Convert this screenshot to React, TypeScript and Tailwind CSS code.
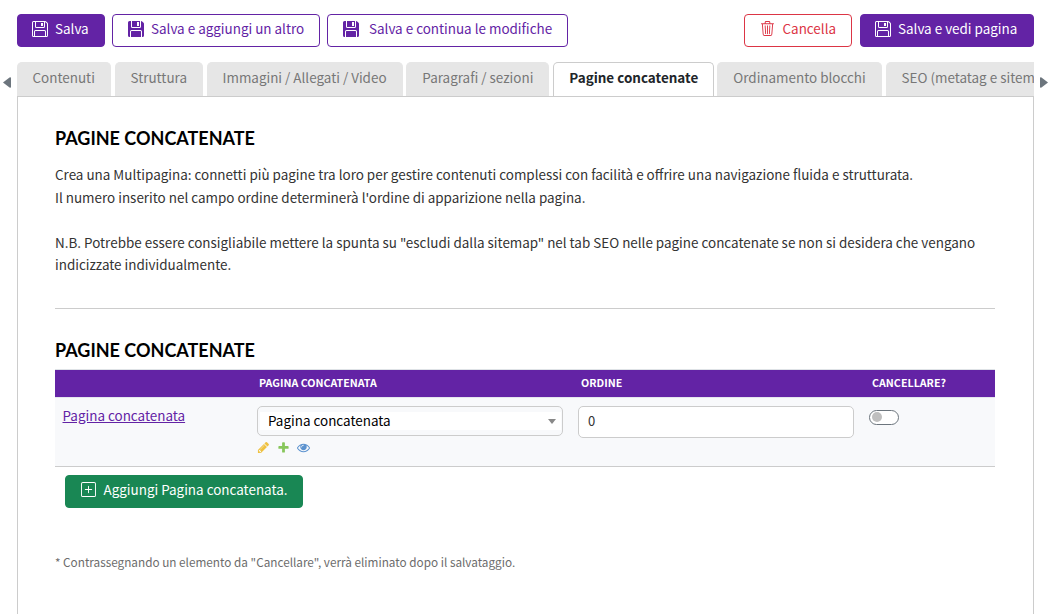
import type { ReactNode } from "react";
import { BsFloppy, BsFloppyFill, BsPlusSquare, BsTrash3 } from "react-icons/bs";

const base = "flex h-[33px] shrink-0 items-center rounded border whitespace-nowrap";

function Btn({ className, children }: { className: string; children: ReactNode }) {
  return <button className={`${base} ${className}`}>{children}</button>;
}

function Label({ children }: { children: ReactNode }) {
  return <span className="mb-[5px] leading-[22px]">{children}</span>;
}

const tabs = [
  { label: "Contenuti", box: "w-[94px] mr-[4px] pl-[15.500px]" },
  { label: "Struttura", box: "w-[88px] mr-[4px] pl-[15.500px]" },
  { label: "Immagini / Allegati / Video", box: "w-[196px] mr-[3px] pl-[15.500px]" },
  { label: "Paragrafi / sezioni", box: "w-[143px] mr-[4px] pl-[16.300px]" },
  { label: "Pagine concatenate", box: "w-[161px] mr-[3px] pl-[15.300px]", active: true },
  { label: "Ordinamento blocchi", box: "w-[165px] mr-[4px] pl-[16.300px]" },
  { label: "SEO (metatag e sitemap)", box: "w-[200px] pl-[15.500px]" },
];

function SectionTitle({ children }: { children: ReactNode }) {
  return (
    <h2 className="mb-[2px] font-['Lato',sans-serif] text-[18px] leading-[20px] font-bold text-black">{children}</h2>
  );
}

export default function App() {
  return (
    <div className="flex h-[614px] w-[1053px] flex-col overflow-hidden bg-white font-['Noto_Sans_CJK_SC',sans-serif] text-[13.440px] text-[#333]">
      <header className="flex h-[62px] pt-[14px] pl-[17px] pr-[19px]">
        <Btn className="w-[88px] border-[#6323a5] bg-[#6323a5] pl-[14px] text-white">
          <BsFloppy className="mr-[7px] mb-[4px] size-[16px]" />
          <Label>Salva</Label>
        </Btn>
        <Btn className="ml-[7px] w-[208px] border-[#6323a5] pl-[15px] text-[#6323a5]">
          <BsFloppyFill className="mr-[7px] mb-[4px] size-[16px]" />
          <Label>Salva e aggiungi un altro</Label>
        </Btn>
        <Btn className="ml-[7px] w-[241px] border-[#6323a5] pl-[15px] text-[#6323a5]">
          <BsFloppyFill className="mr-[10px] mb-[4px] size-[16px]" />
          <Label>Salva e continua le modifiche</Label>
        </Btn>
        <Btn className="ml-auto w-[108px] border-[#dc3545] pl-[15px] text-[#dc3545]">
          <BsTrash3 className="mr-[7.500px] mb-[5px] size-[15px]" />
          <Label>Cancella</Label>
        </Btn>
        <Btn className="ml-[8px] w-[174px] border-[#6323a5] bg-[#6323a5] pl-[14px] text-white">
          <BsFloppy className="mr-[7px] mb-[4px] size-[16px]" />
          <Label>Salva e vedi pagina</Label>
        </Btn>
      </header>

      <nav className="flex h-[35px] shrink-0">
        <div className="w-[17px] pt-[15px] pl-[3px]">
          <svg width="8" height="11" viewBox="0 0 8 12" preserveAspectRatio="none" fill="#6c757d"><path d="M0 6 6.500 .500Q8 0 8 1v10q0 1-1.500.500Z" /></svg>
        </div>
        <div className="flex w-[1017px] overflow-hidden border-b border-[#ccc]">
          {tabs.map((t) => (
            <div
              key={t.label}
              className={`${t.box} shrink-0 rounded-t-[5px] leading-[29px] whitespace-nowrap ${
                t.active ? "h-[35px] border border-b-0 border-[#ccc] bg-white font-bold text-[#212529]" : "h-[34px] border-t border-[#e6e6e6] bg-[#e6e6e6] text-[#777]"
              }`}
            >
              {t.label}
            </div>
          ))}
        </div>
        <div className="w-[19px] pt-[15px] pl-[6px]">
          <svg width="8" height="11" viewBox="0 0 8 12" preserveAspectRatio="none" fill="#6c757d"><path d="M8 6 1.500 .500Q0 0 0 1v10q0 1 1.500.500Z" /></svg>
        </div>
      </nav>

      <main className="ml-[17px] h-[517px] w-[1017px] border-x border-[#ccc] pt-[31px] pr-[38px] pl-[37px]">
        <SectionTitle>PAGINE CONCATENATE</SectionTitle>
        <div className="pt-[13px] leading-[22.500px] whitespace-nowrap">
          <p>Crea una Multipagina: connetti più pagine tra loro per gestire contenuti complessi con facilità e offrire una navigazione fluida e strutturata.</p>
          <p>Il numero inserito nel campo ordine determinerà l'ordine di apparizione nella pagina.</p>
          <p className="mt-[22.500px]">N.B. Potrebbe essere consigliabile mettere la spunta su "escludi dalla sitemap" nel tab SEO nelle pagine concatenate se non si desidera che vengano</p>
          <p>indicizzate individualmente.</p>
        </div>
        <hr className="mt-[32px] border-[#ccc]" />
        <div className="flex flex-col pt-[31px] pb-[7px]">
          <SectionTitle>PAGINE CONCATENATE</SectionTitle>
        </div>

        <div className="w-[940px] border-y border-b-[#ccc] border-t-[#dee2e6]">
          <div className="flex h-[27px] bg-[#6323a5] text-[10.700px] leading-[25px] font-bold text-white">
            <span className="ml-[204px] w-[322px]">PAGINA CONCATENATA</span>
            <span className="w-[291px]">ORDINE</span>
            <span>CANCELLARE?</span>
          </div>
          <div className="flex h-[69px] border-t border-[#e5e5ee] bg-[#f8f9fb]">
            <div className="w-[202px] pt-[6px] pl-[7.500px] leading-[22px]">
              <a className="text-[#6323a5] underline" href="#concatenata">Pagina concatenata</a>
            </div>
            <div className="w-[321px] pt-[8px]">
              <div className="flex h-[30px] w-[306px] items-center rounded-[5px] border border-[#ccc] pl-[2px]">
                <div className="flex h-[18px] w-[301px] items-center justify-between bg-white pr-[5px] pl-[8px] text-black">
                  <span className="mb-[2px] leading-[18px]">Pagina concatenata</span>
                  <svg className="mt-[2px]" width="8" height="5" viewBox="0 0 8 5" fill="#888"><path d="M0 0h8L4 5Z" /></svg>
                </div>
              </div>
              <div className="mt-[5px] flex gap-[7px]">
                <svg width="13" height="13" viewBox="0 0 1792 1792" fill="#efc140"><path d="M491 1536l91-91-235-235-91 91v107h128v128h107zm523-928q0-22-22-22-10 0-17 7l-542 542q-7 7-7 17 0 22 22 22 10 0 17-7l542-542q7-7 7-17zm-54-192l416 416-832 832h-416v-416zm683 96q0 53-37 90l-166 166-416-416 166-165q36-38 90-38 53 0 91 38l235 234q37 39 37 91z" /></svg>
                <svg width="13" height="13" viewBox="0 0 1792 1792" fill="#87c65b"><path d="M1600 796v192q0 40-28 68t-68 28h-416v416q0 40-28 68t-68 28h-192q-40 0-68-28t-28-68v-416h-416q-40 0-68-28t-28-68v-192q0-40 28-68t68-28h416v-416q0-40 28-68t68-28h192q40 0 68 28t28 68v416h416q40 0 68 28t28 68z" /></svg>
                <svg width="13" height="13" viewBox="0 0 1792 1792" fill="#5b92cf"><path d="M1664 960q-152-236-381-353 61 104 61 225 0 185-131.500 316.500t-316.500 131.500-316.500-131.500-131.500-316.500q0-121 61-225-229 117-381 353 133 205 333.500 326.500t434.500 121.500 434.500-121.500 333.500-326.500zm-720-384q0-20-14-34t-34-14q-125 0-214.500 89.500t-89.500 214.500q0 20 14 34t34 14 34-14 14-34q0-86 61-147t147-61q20 0 34-14t14-34zm848 384q0 34-20 69-140 230-376.500 368.500t-499.500 138.500-499.500-139-376.500-368q-20-35-20-69t20-69q140-229 376.500-368t499.500-139 499.500 139 376.500 368q20 35 20 69z" /></svg>
              </div>
            </div>
            <div className="w-[291px] pt-[8px]">
              <div className="h-[32px] w-[276px] rounded-[5px] border border-[#ccc] bg-white pl-[9px] text-[13px] leading-[27px]">0</div>
            </div>
            <div className="pt-[12px]">
              <div className="flex h-[15px] w-[30px] items-center rounded-full border border-[#6c757d] bg-white pl-[2px]">
                <span className="size-[10px] rounded-full bg-[#bfbfbf]" />
              </div>
            </div>
          </div>
        </div>

        <Btn className="mt-[8px] ml-[10px] w-[238px] border-[#198754] bg-[#198754] pl-[15px] text-white">
          <BsPlusSquare className="mr-[7.500px] mb-[4px] size-[15px]" />
          <Label>Aggiungi Pagina concatenata.</Label>
        </Btn>
        <p className="mt-[44px] text-[11.750px] leading-[20px] text-[#6c6c6c]">* Contrassegnando un elemento da "Cancellare", verrà eliminato dopo il salvataggio.</p>
      </main>
    </div>
  );
}
